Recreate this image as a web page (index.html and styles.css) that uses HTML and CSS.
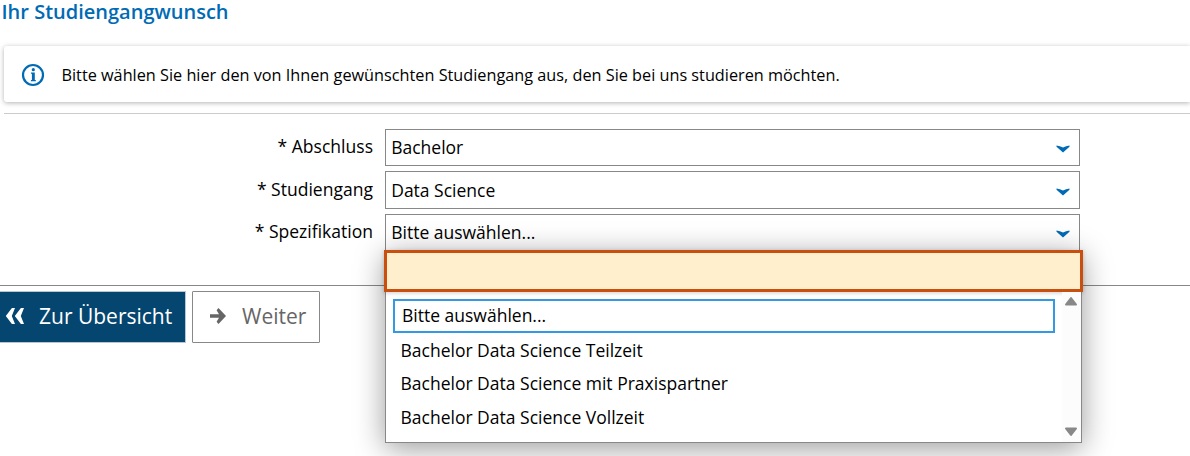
FILE: index.html
```html
<!DOCTYPE html>
<html lang="de">
<head>
<meta charset="utf-8">
<title>Ihr Studiengangwunsch</title>
<link rel="stylesheet" href="styles.css">
</head>
<body>
<h1 class="title"><span>Ihr Studiengangwunsch</span></h1>
<div class="info">
  <svg class="info-icon" width="24" height="24" viewBox="0 0 24 24"><circle cx="12" cy="12" r="10" fill="none" stroke="#006bb4" stroke-width="2.2"/><circle cx="12.3" cy="6.7" r="1.6" fill="#006bb4"/><path d="M10 9.5h3.8v7.6h1v1.2H9.9V17.1h1v-6.4H10z" fill="#006bb4"/></svg>
  <span>Bitte wählen Sie hier den von Ihnen gewünschten Studiengang aus, den Sie bei uns studieren möchten.</span>
</div>
<form class="form">
  <div class="row row-a">
    <label class="label"><span>* Abschluss</span></label>
    <div class="select"><span>Bachelor</span><svg class="chevron" width="14" height="8" viewBox="0 0 14 8"><path d="M.5 .5Q4 .8 7 2.6Q10 .8 13.5 .5V1.8L7 7.6L.5 1.8z"/></svg></div>
  </div>
  <div class="row row-b">
    <label class="label"><span>* Studiengang</span></label>
    <div class="select"><span>Data Science</span><svg class="chevron" width="14" height="8" viewBox="0 0 14 8"><path d="M.5 .5Q4 .8 7 2.6Q10 .8 13.5 .5V1.8L7 7.6L.5 1.8z"/></svg></div>
  </div>
  <div class="row row-c">
    <label class="label"><span>* Spezifikation</span></label>
    <div class="select"><span>Bitte auswählen...</span><svg class="chevron" width="14" height="8" viewBox="0 0 14 8"><path d="M.5 .5Q4 .8 7 2.6Q10 .8 13.5 .5V1.8L7 7.6L.5 1.8z"/></svg>
      <div class="popup">
        <div class="search"></div>
        <div class="list">
          <div class="options">
            <div class="option active"><span>Bitte auswählen...</span></div>
            <div class="option"><span>Bachelor Data Science Teilzeit</span></div>
            <div class="option"><span>Bachelor Data Science mit Praxispartner</span></div>
            <div class="option"><span>Bachelor Data Science Vollzeit</span></div>
          </div>
          <div class="scrollbar">
            <svg width="14" height="10" viewBox="0 0 14 10"><path d="M2 8.5L7 2L12 8.5z"/></svg>
            <svg width="14" height="10" viewBox="0 0 14 10"><path d="M2 1.5L7 8L12 1.5z"/></svg>
          </div>
        </div>
      </div>
    </div>
  </div>
</form>
<div class="actions">
  <button class="button primary"><svg width="20" height="18" viewBox="0 0 20 18"><path d="M6.9 1H10L6.8 9L10 17H6.9L.8 9zM15.9 1H19L15.8 9L19 17H15.9L9.8 9z"/></svg><span>Zur Übersicht</span></button>
  <button class="button secondary"><svg width="18" height="18" viewBox="0 0 18 18"><path d="M1 7.3H10L7.6 3.3L9.5 1L17 9L9.5 17L7.6 14.7L10 10.7H1z" fill="#666"/></svg><span>Weiter</span></button>
</div>
</body>
</html>
```
FILE: styles.css
```css
* { box-sizing: border-box; }
body {
  margin: 0;
  height: 456px;
  overflow: hidden;
  background: #fff;
  color: #000;
  font-family: "Open Sans", sans-serif;
  font-size: 17.5px;
  line-height: 24px;
}
.title {
  margin: 0;
  padding-left: 1.5px;
  height: 46px;
  font-size: 20px;
  font-weight: 600;
  color: #006bb4;
}
.info {
  display: flex;
  align-items: center;
  height: 56px;
  margin-left: 4px;
  padding: 1px 0 0 16.5px;
  gap: 17px;
  border-radius: 3px 0 0 3px;
  box-shadow: 0 1px 5px rgba(0, 0, 0, .3);
  font-size: 16.25px;
  white-space: nowrap;
}
.form {
  height: 173px;
  margin: 11px 0 0;
  border-bottom: 1px solid #888;
}
.form::before {
  content: "";
  display: block;
  height: 1px;
  margin: 0 0 15px 4px;
  background: #ccc;
}
.row {
  display: grid;
  grid-template-columns: 373px 695px;
  column-gap: 12px;
}
.row-a { height: 37px; margin-bottom: 5px; }
.row-b { height: 38px; margin-bottom: 5px; }
.row-c { height: 38px; }
.label { padding-top: 6px; text-align: right; font-size: 17.55px; }
.row-c .label, .row-a .label { padding-top: 5px; }
.select {
  position: relative;
  display: flex;
  align-items: center;
  justify-content: space-between;
  padding: 0 9px 0 5.2px;
  border: 1px solid #888;
  background: #fff;
}
.row-a .select { padding-bottom: 1px; }
.row-c .select { padding-bottom: 2px; }
.chevron { fill: #006bb4; margin-top: 3px; }
.popup {
  position: absolute;
  z-index: 2;
  top: 35px;
  left: -1px;
  width: 697px;
  height: 193px;
  border: 1px solid #888;
  background: #fff;
  box-shadow: 0 5px 28px rgba(0, 0, 0, .4);
}
.search {
  height: 42px;
  margin: -1px -2px 0;
  border: 3px solid #c94f10;
  background: #ffefcd;
  box-shadow: 0 1px 4px rgba(0, 0, 0, .2);
}
.list { display: flex; height: 150px; }
.options { width: 676px; padding: 7px 7px 0; }
.option {
  display: flex;
  align-items: center;
  height: 33.5px;
  padding-left: 7.5px;
}
.active { height: 34px; padding: 0 0 2px 7px; border: 2px solid #3399e3; }
.scrollbar {
  display: flex;
  flex: 1;
  flex-direction: column;
  align-items: center;
  justify-content: space-between;
  padding: 4px 1px 5px 0;
  background: #fcfcfc;
}
.scrollbar svg { fill: #888; stroke: #888; stroke-linejoin: round; stroke-width: 2px; }
.actions { display: flex; gap: 6px; padding-top: 5px; }
.button {
  display: flex;
  align-items: center;
  height: 52px;
  padding: 0 0 2px;
  font: 21px/28px "Open Sans", sans-serif;
}
.primary {
  width: 186px;
  padding-left: 5px;
  gap: 14px;
  border: 1px solid #b9c5d0;
  border-left: 0;
  background: #04466f;
  color: #fff;
  fill: #fff;
}
.secondary {
  width: 128px;
  padding-left: 16px;
  gap: 15px;
  border: 1px solid #888;
  border-radius: 1px;
  background: #fff;
  color: #666;
}
```
